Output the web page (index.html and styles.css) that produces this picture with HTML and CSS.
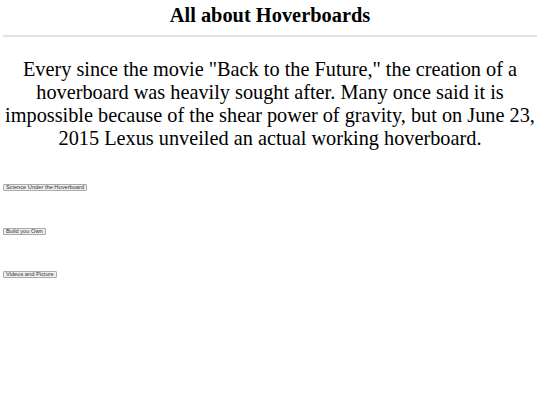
FILE: index.html
```html
<!DOCTYPE html>
<html>
<head>
<meta charset="utf-8">
<link rel="stylesheet" href="styles.css">
</head>
<body>
<h1 class="title">All about Hoverboards</h1>
<hr class="rule">
<p class="intro">Every since the movie "Back to the Future," the creation of a hoverboard was heavily sought after. Many once said it is impossible because of the shear power of gravity, but on June 23, 2015 Lexus unveiled an actual working hoverboard.</p>
<div class="links">
  <div class="item"><button class="btn">Science Under the Hoverboard</button></div>
  <div class="item"><button class="btn">Build you Own</button></div>
  <div class="item"><button class="btn">Videos and Picture</button></div>
</div>
</body>
</html>
```
FILE: styles.css
```css
body {
  margin: 3px;
  font-family: "Liberation Serif", serif;
  color: #000;
  background: #fff;
}
.title {
  font-size: 20.4px;
  text-align: center;
  margin: 0 0 8px;
  line-height: 24px;
}
.rule {
  border: none;
  border-top: 2px solid #e2e2e2;
  margin: 0;
}
.intro {
  font-size: 20.3px;
  line-height: 23px;
  text-align: center;
  margin: 20.5px 0 0;
}
.links {
  display: flex;
  flex-direction: column;
  gap: 36.5px;
  margin-top: 34.5px;
}
.item {
  height: 7px;
  display: flex;
}
.btn {
  font-family: "Liberation Sans", sans-serif;
  font-size: 5.7px;
  padding: 0 2px;
  height: 7px;
  line-height: 5px;
  border: 1px solid #aaa;
  border-radius: 1px;
  background: #efefef;
  color: #333;
}
```
